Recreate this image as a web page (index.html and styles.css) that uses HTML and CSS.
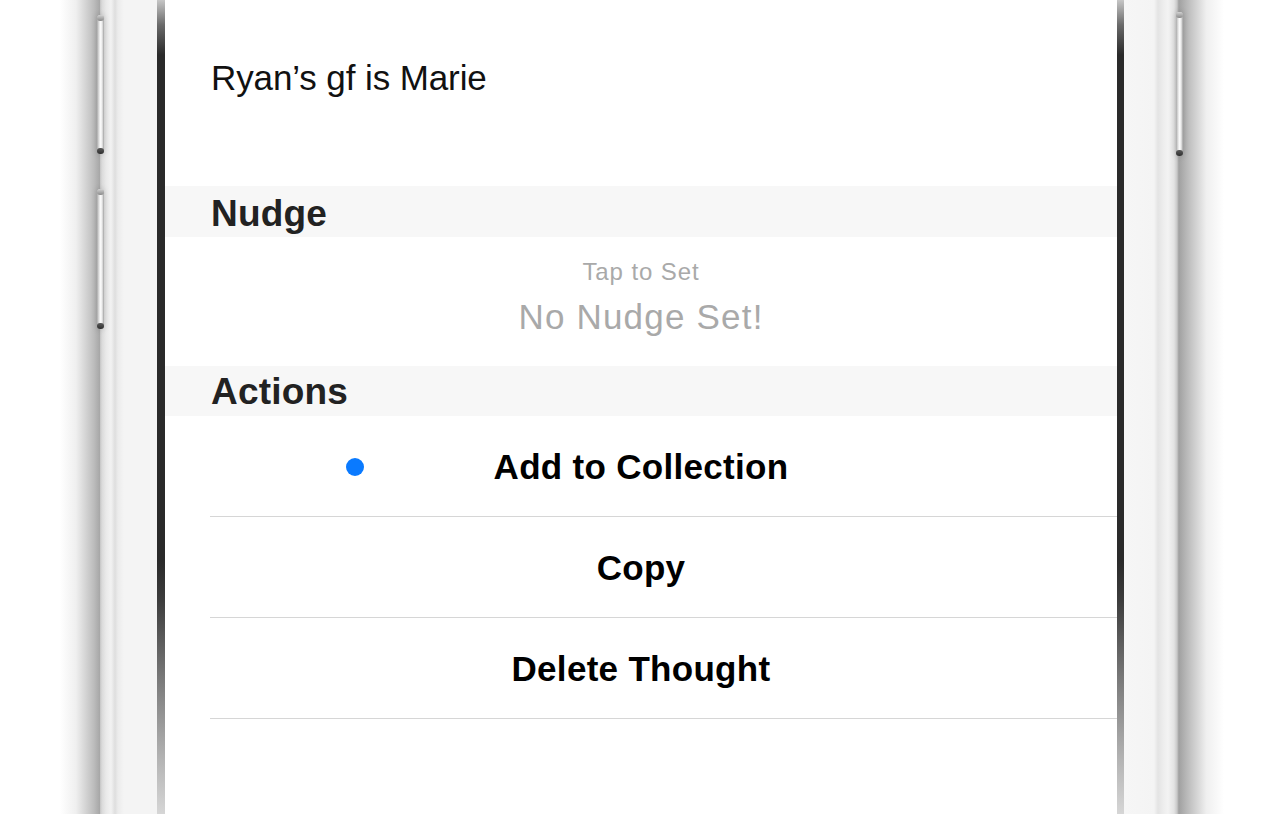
FILE: index.html
```html
<!DOCTYPE html>
<html>
<head>
<meta charset="utf-8">
<link rel="stylesheet" href="styles.css">
</head>
<body>
<div class="stage">
  <div class="side side-left">
    <div class="shadow shadow-left"></div>
    <div class="metal metal-left">
      <div class="btn btn-vol1"></div>
      <div class="btn btn-vol2"></div>
    </div>
    <div class="bezel"></div>
  </div>
  <div class="screen">
    <div class="note">Ryan’s gf is Marie</div>
    <div class="section-header sh-nudge">Nudge</div>
    <div class="nudge-cell">
      <div class="tap">Tap to Set</div>
      <div class="nonudge">No Nudge Set!</div>
    </div>
    <div class="section-header sh-actions">Actions</div>
    <div class="actions">
      <div class="action-row"><span class="dot"></span><span class="action-label">Add to Collection</span></div>
      <div class="action-row"><span class="action-label">Copy</span></div>
      <div class="action-row"><span class="action-label">Delete Thought</span></div>
    </div>
  </div>
  <div class="side side-right">
    <div class="bezel"></div>
    <div class="metal metal-right">
      <div class="btn btn-power"></div>
    </div>
    <div class="shadow shadow-right"></div>
  </div>
</div>
</body>
</html>
```

FILE: styles.css
```css
html, body {
  margin: 0;
  padding: 0;
  background: #ffffff;
}
body {
  width: 1280px;
  height: 814px;
  overflow: hidden;
  font-family: "Liberation Sans", Arial, sans-serif;
}
.stage {
  display: flex;
  width: 1280px;
  height: 814px;
}
.side {
  display: flex;
  height: 814px;
}
.side-left {
  width: 165px;
  padding-left: 60px;
  box-sizing: border-box;
}
.side-right {
  width: 163px;
}
.shadow-left {
  width: 40px;
  background: linear-gradient(to right, rgba(255,255,255,0) 0%, rgba(210,210,210,0.35) 40%, #bcbcbc 85%, #a6a6a6 100%);
}
.shadow-right {
  width: 44px;
  background: linear-gradient(to left, rgba(255,255,255,0) 0%, rgba(210,210,210,0.35) 40%, #b8b8b8 85%, #a4a4a4 100%);
}
.metal {
  position: relative;
}
.metal-left {
  width: 57px;
  background: linear-gradient(to right, #c4c4c4 0px, #dadada 2px, #e9e9e9 6px, #f2f2f2 11px, #dedede 15px, #ececec 18px, #f4f4f4 24px, #f4f4f4 100%);
}
.metal-right {
  width: 56px;
  background: linear-gradient(to right, #f6f6f6 0px, #f4f4f4 30px, #e4e4e4 34px, #eeeeee 40px, #f3f3f3 44px, #e3e3e3 50px, #c9c9c9 53px, #9d9d9d 55px, #a8a8a8 56px);
}
.bezel {
  width: 8px;
  background: linear-gradient(to bottom, #c6c6c6 0px, #6a6a6a 25px, #2a2a2a 55px, #2a2a2a 560px, #3c3c3c 600px, #7a7a7a 680px, #b4b4b4 760px, #d6d6d6 814px);
}
.side-right .bezel {
  width: 7px;
}
.btn {
  position: absolute;
  width: 7px;
  border-radius: 4px;
  background: linear-gradient(to right, #a9a9a9 0%, #e2e2e2 30%, #ffffff 55%, #cfcfcf 85%, #9a9a9a 100%);
  box-shadow: 0 0 6px rgba(0,0,0,0.18);
}
.btn::before, .btn::after {
  content: "";
  position: absolute;
  left: 0;
  right: 0;
  height: 6px;
  border-radius: 4px;
}
.btn::before {
  top: 0;
  background: linear-gradient(to bottom, #d0d0d0, #8a8a8a);
}
.btn::after {
  bottom: 0;
  background: linear-gradient(to bottom, #5a5a5a, #2e2e2e);
}
.btn-vol1 {
  left: -3px;
  top: 15px;
  height: 139px;
}
.btn-vol2 {
  left: -3px;
  top: 189px;
  height: 140px;
}
.btn-power {
  left: 52px;
  top: 12px;
  height: 144px;
}

.screen {
  width: 952px;
  height: 814px;
  background: #ffffff;
  display: flex;
  flex-direction: column;
}
.note {
  height: 186px;
  box-sizing: border-box;
  padding: 58px 0 0 46px;
  font-size: 35px;
  line-height: 40px;
  color: #111111;
  letter-spacing: -0.1px;
}
.section-header {
  background: #f7f7f7;
  box-sizing: border-box;
  padding-left: 46px;
  font-weight: bold;
  font-size: 37px;
  color: #222222;
  letter-spacing: 0.2px;
}
.sh-nudge {
  height: 51px;
  padding-top: 5px;
  line-height: 46px;
}
.sh-actions {
  height: 50px;
  padding-top: 3px;
  line-height: 46px;
}
.nudge-cell {
  height: 129px;
  box-sizing: border-box;
  padding-top: 20px;
  display: flex;
  flex-direction: column;
  align-items: center;
  color: #a9a9a9;
}
.tap {
  font-size: 24px;
  line-height: 30px;
  letter-spacing: 0.9px;
}
.nonudge {
  font-size: 35px;
  line-height: 42px;
  margin-top: 9px;
  letter-spacing: 1.2px;
}
.actions {
  display: flex;
  flex-direction: column;
}
.action-row {
  position: relative;
  height: 101px;
  margin-left: 45px;
  box-sizing: border-box;
  border-bottom: 1px solid #d6d6d6;
  display: flex;
  align-items: center;
  justify-content: center;
  padding-right: 45px;
  padding-top: 2px;
}
.action-label {
  font-weight: bold;
  font-size: 35px;
  color: #000000;
  letter-spacing: 0.3px;
}
.dot {
  position: absolute;
  left: 136px;
  top: 50%;
  width: 18px;
  height: 18px;
  margin-top: -8px;
  border-radius: 50%;
  background: #0a7aff;
}
```
